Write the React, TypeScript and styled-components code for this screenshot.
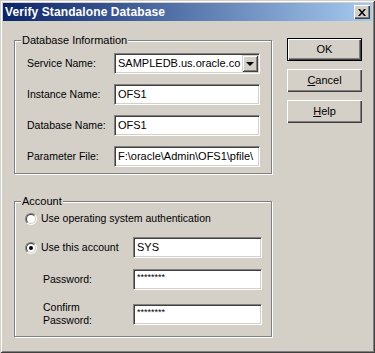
import React from 'react';
import styled, { createGlobalStyle } from 'styled-components';

const GlobalStyle = createGlobalStyle`
  html, body {
    margin: 0;
    padding: 0;
    background: #d4d0c8;
  }
  * {
    box-sizing: border-box;
  }
`;

const Window = styled.div`
  width: 375px;
  height: 353px;
  padding: 3px;
  background: #d4d0c8;
  font-family: "Liberation Sans", Arial, sans-serif;
  font-size: 10.5px;
  color: #000;
  box-shadow: inset 1px 1px 0 #d4d0c8, inset -1px -1px 0 #404040,
    inset 2px 2px 0 #fff, inset -2px -2px 0 #808080;
`;

const TitleBar = styled.div`
  height: 18px;
  display: flex;
  align-items: center;
  justify-content: space-between;
  padding: 0 2px 0 2px;
  background: linear-gradient(to right, #0a246a, #a6caf0);
`;

const TitleText = styled.span`
  color: #fff;
  font-weight: bold;
  font-size: 12px;
  letter-spacing: 0.1px;
`;

const CloseButton = styled.div`
  width: 16px;
  height: 14px;
  display: flex;
  align-items: center;
  justify-content: center;
  background: #d4d0c8;
  box-shadow: inset 1px 1px 0 #fff, inset -1px -1px 0 #404040,
    inset -2px -2px 0 #808080;
`;

const Body = styled.div`
  display: flex;
  gap: 15px;
  padding: 13px 0 0 11px;
`;

const LeftColumn = styled.div`
  display: flex;
  flex-direction: column;
  gap: 21px;
`;

const Group = styled.fieldset<{ $height: number }>`
  margin: 0;
  padding: 0;
  width: 258px;
  height: ${p => p.$height}px;
  border: 1px solid #808080;
  box-shadow: inset 1px 1px 0 #fff, 1px 1px 0 #fff;
`;

const Legend = styled.legend`
  margin-left: 6px;
  padding: 0 1px;
  line-height: 13px;
  font-size: 11px;
  background: #d4d0c8;
`;

const FieldGrid = styled.div<{ $cols: string; $gap: number; $top: number; $left: number }>`
  display: grid;
  grid-template-columns: ${p => p.$cols};
  row-gap: ${p => p.$gap}px;
  align-items: center;
  padding: ${p => p.$top}px 0 0 ${p => p.$left}px;
`;

const Label = styled.label<{ $indent?: number }>`
  line-height: 13px;
  padding-left: ${p => p.$indent || 0}px;
`;

const TextBox = styled.div<{ $small?: boolean }>`
  height: 21px;
  display: flex;
  align-items: ${p => (p.$small ? 'flex-start' : 'center')};
  padding: ${p => (p.$small ? '3px 0 0 3px' : '0 0 0 3px')};
  background: #fff;
  border: 1px solid;
  border-color: #808080 #fff #fff #808080;
  box-shadow: inset 1px 1px 0 #404040, inset -1px -1px 0 #d4d0c8;
  white-space: nowrap;
  overflow: hidden;
  font-size: ${p => (p.$small ? '9px' : '11px')};
  line-height: ${p => (p.$small ? '9px' : '13px')};
`;

const ComboBox = styled(TextBox)`
  justify-content: space-between;
  padding-right: 1px;
`;

const DropButton = styled.div`
  width: 16px;
  height: 17px;
  display: flex;
  align-items: center;
  justify-content: center;
  background: #d4d0c8;
  box-shadow: inset 1px 1px 0 #d4d0c8, inset -1px -1px 0 #404040,
    inset 2px 2px 0 #fff, inset -2px -2px 0 #808080;
`;

const Arrow = styled.span`
  width: 0;
  height: 0;
  border-left: 4px solid transparent;
  border-right: 4px solid transparent;
  border-top: 4px solid #000;
  margin-top: 1px;
`;

const RadioRow = styled.div<{ $span?: boolean }>`
  display: flex;
  align-items: center;
  gap: 4px;
  grid-column: ${p => (p.$span ? '1 / 3' : 'auto')};
  margin-bottom: ${p => (p.$span ? '1px' : '0')};
  line-height: 13px;
`;

const RadioCircle = styled.span`
  width: 12px;
  height: 12px;
  border-radius: 50%;
  border: 1px solid;
  border-color: #808080 #fff #fff #808080;
  display: flex;
  align-items: center;
  justify-content: center;
`;

const RadioInner = styled.span<{ $checked?: boolean }>`
  width: 10px;
  height: 10px;
  border-radius: 50%;
  border: 1px solid;
  border-color: #404040 #d4d0c8 #d4d0c8 #404040;
  background: #fff;
  display: flex;
  align-items: center;
  justify-content: center;
  &::after {
    content: '';
    width: 4px;
    height: 4px;
    border-radius: 50%;
    background: ${p => (p.$checked ? '#000' : 'transparent')};
  }
`;

const ButtonColumn = styled.div`
  display: flex;
  flex-direction: column;
  gap: 8px;
  padding-top: 4px;
`;

const Button = styled.div<{ $default?: boolean }>`
  width: 75px;
  height: 23px;
  display: flex;
  align-items: center;
  justify-content: center;
  font-size: 11px;
  background: #d4d0c8;
  border: ${p => (p.$default ? '1px solid #000' : 'none')};
  box-shadow: inset 1px 1px 0 #fff, inset -1px -1px 0 #404040,
    inset -2px -2px 0 #808080;
  padding-bottom: 1px;
`;

const Key = styled.span`
  text-decoration: underline;
`;

const Radio: React.FC<{ checked?: boolean }> = ({ checked }) => (
  <RadioCircle>
    <RadioInner $checked={checked} />
  </RadioCircle>
);

const App: React.FC = () => {
  return (
    <Window>
      <GlobalStyle />
      <TitleBar>
        <TitleText>Verify Standalone Database</TitleText>
        <CloseButton>
          <svg width="8" height="7" viewBox="0 0 8 7">
            <path d="M0 0h2l2 2.5L6 0h2L5 3.5 8 7H6L4 4.5 2 7H0l3-3.5z" fill="#000" />
          </svg>
        </CloseButton>
      </TitleBar>
      <Body>
        <LeftColumn>
          <Group $height={140}>
            <Legend>Database Information</Legend>
            <FieldGrid $cols="87px 146px" $gap={10} $top={6} $left={12}>
              <Label>Service Name:</Label>
              <ComboBox>
                <span>SAMPLEDB.us.oracle.co</span>
                <DropButton>
                  <Arrow />
                </DropButton>
              </ComboBox>
              <Label>Instance Name:</Label>
              <TextBox>OFS1</TextBox>
              <Label>Database Name:</Label>
              <TextBox>OFS1</TextBox>
              <Label>Parameter File:</Label>
              <TextBox>F:\oracle\Admin\OFS1\pfile\</TextBox>
            </FieldGrid>
          </Group>
          <Group $height={142}>
            <Legend>Account</Legend>
            <FieldGrid $cols="108px 129px" $gap={11} $top={4} $left={10}>
              <RadioRow $span>
                <Radio />
                <span>Use operating system authentication</span>
              </RadioRow>
              <RadioRow>
                <Radio checked />
                <span>Use this account</span>
              </RadioRow>
              <TextBox>SYS</TextBox>
              <Label $indent={18}>Password:</Label>
              <TextBox $small>********</TextBox>
              <Label $indent={18}>
                Confirm
                <br />
                Password:
              </Label>
              <TextBox $small>********</TextBox>
            </FieldGrid>
          </Group>
        </LeftColumn>
        <ButtonColumn>
          <Button $default>OK</Button>
          <Button>
            <span>
              <Key>C</Key>ancel
            </span>
          </Button>
          <Button>
            <span>
              <Key>H</Key>elp
            </span>
          </Button>
        </ButtonColumn>
      </Body>
    </Window>
  );
};

export default App;
